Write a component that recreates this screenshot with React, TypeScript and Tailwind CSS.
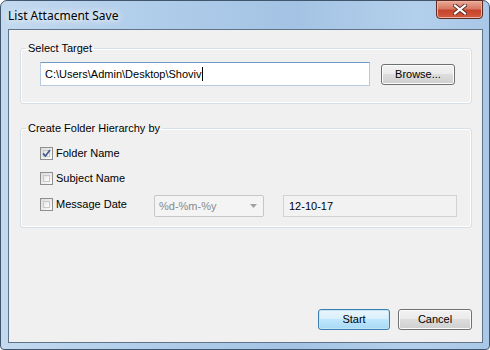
import React from 'react';

const titleFont = { fontFamily: '"Noto Sans", "Open Sans", sans-serif' };
const bodyFont = { fontFamily: '"Liberation Sans", Arial, sans-serif' };

function Checkbox({ checked }: { checked?: boolean }) {
  return (
    <span className="w-[13px] h-[13px] border border-[#8f8f8f] bg-[linear-gradient(135deg,#dcdcdc,#fbfbfb)] p-[2px] flex items-center justify-center shrink-0">
      <span className="w-full h-full border border-[#c8c8c8] bg-[linear-gradient(135deg,#e6e6e6,#ffffff)] flex items-center justify-center">
        {checked && (
          <svg width="9" height="9" viewBox="0 0 9 9" className="-m-[2px]">
            <path d="M1 4.5 L3.5 7 L8 1" fill="none" stroke="#4a5e96" strokeWidth="1.8" />
          </svg>
        )}
      </span>
    </span>
  );
}

function WinButton({ label, primary, w }: { label: string; primary?: boolean; w: string }) {
  return (
    <button
      className={
        primary
          ? `${w} h-[21px] rounded-[3px] border border-[#3c7fb1] bg-[linear-gradient(#eaf6fd,#d9f0fc_45%,#bee6fd_50%,#a7d9f5)] shadow-[inset_0_0_0_1px_#c4e5f6] text-[11px] text-black leading-none`
          : `${w} h-[21px] rounded-[3px] border border-[#707070] bg-[linear-gradient(#f2f2f2,#ebebeb_45%,#dddddd_50%,#cfcfcf)] shadow-[inset_0_0_0_1px_#fcfcfc] text-[11px] text-black leading-none`
      }
      style={bodyFont}
    >
      {label}
    </button>
  );
}

export default function App() {
  return (
    <div className="w-[490px] h-[350px] bg-white" style={titleFont}>
      <div className="w-full h-full rounded-t-[7px] rounded-b-[4px] border border-[#41566d] bg-[linear-gradient(90deg,#c3d9ef,#b0cdea_30%,#a4c3e4_60%,#b3cfeb_85%,#a9c7e7)] flex flex-col pl-[7px] pr-[6px] pb-[6px]">
        {/* title bar */}
        <div className="h-[28px] flex items-start justify-between">
          <span className="pt-[7px] text-[12px] leading-[16px] text-black [text-shadow:0_0_6px_#ffffff,0_0_10px_#ffffff]">
            List Attacment Save
          </span>
          <div className="w-[47px] h-[19px] -mt-px rounded-b-[4px] border border-[#5b2a22] bg-[linear-gradient(#e9a996,#d77963_45%,#c6442c_55%,#d25a3e)] shadow-[inset_0_0_0_1px_#efb3a4] flex items-center justify-center">
            <svg width="14" height="11" viewBox="0 0 14 11">
              <path d="M2 1.5 L12 9.5 M12 1.5 L2 9.5" stroke="#5a2a22" strokeWidth="4" strokeLinecap="square" />
              <path d="M2 1.5 L12 9.5 M12 1.5 L2 9.5" stroke="#ffffff" strokeWidth="2.2" strokeLinecap="square" />
            </svg>
          </div>
        </div>

        {/* client area */}
        <div className="flex-1 border border-[#5f7389] bg-[#f0f0f0] flex flex-col text-[11px] text-black" style={bodyFont}>
          <fieldset className="mt-[10px] ml-[11px] mr-[10px] border border-[#d5dfe5] rounded-[3px] shadow-[inset_0_0_0_1px_#ffffff] pl-[19px] pr-[15px] pb-[17px]">
            <legend className="-ml-[14px] px-[2px] leading-[16px]">Select Target</legend>
            <div className="mt-[6px] flex items-center gap-[11px]">
              <div className="w-[330px] h-[24px] border border-[#b4cbe2] border-t-[#6f9ac5] bg-white flex items-center pl-[4px]">
                <span>C:\Users\Admin\Desktop\Shoviv</span>
                <span className="w-px h-[14px] bg-black" />
              </div>
              <WinButton label="Browse..." w="w-[74px]" />
            </div>
          </fieldset>

          <fieldset className="mt-[16px] ml-[11px] mr-[10px] border border-[#d5dfe5] rounded-[3px] shadow-[inset_0_0_0_1px_#ffffff] pl-[19px] pb-[10px]">
            <legend className="-ml-[14px] px-[2px] leading-[16px]">Create Folder Hierarchy by</legend>
            <div className="mt-[6px] h-[22px] flex items-center gap-[3px]">
              <Checkbox checked />
              <span>Folder Name</span>
            </div>
            <div className="mt-[3px] h-[22px] flex items-center gap-[3px]">
              <Checkbox />
              <span>Subject Name</span>
            </div>
            <div className="mt-[6px] h-[22px] flex items-center">
              <div className="w-[114px] flex items-center gap-[3px] -mt-[4px]">
                <Checkbox />
                <span>Message Date</span>
              </div>
              <div className="w-[110px] h-[22px] rounded-[2px] border border-[#c5c8cb] bg-[#f4f4f4] flex items-center justify-between pl-[4px] pr-[6px] text-[#8a8a8a]">
                <span>%d-%m-%y</span>
                <svg width="7" height="4" viewBox="0 0 7 4">
                  <path d="M0 0 H7 L3.5 4 Z" fill="#a0a0a0" />
                </svg>
              </div>
              <div className="ml-[19px] w-[174px] h-[22px] border border-[#d0d3d6] bg-[#f2f2f2] flex items-center pl-[5px]">
                12-10-17
              </div>
            </div>
          </fieldset>

          <div className="mt-auto mb-[12px] mr-[10px] flex justify-end gap-[8px]">
            <WinButton label="Start" primary w="w-[72px]" />
            <WinButton label="Cancel" w="w-[74px]" />
          </div>
        </div>
      </div>
    </div>
  );
}
